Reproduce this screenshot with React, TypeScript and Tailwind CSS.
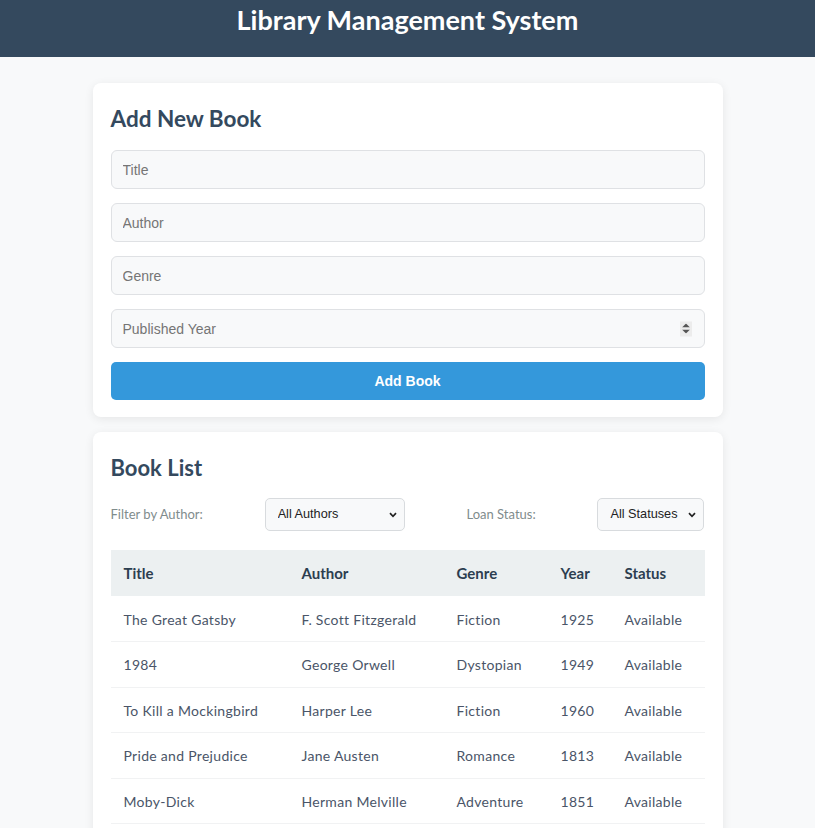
import React from "react";

const books = [
  ["The Great Gatsby", "F. Scott Fitzgerald", "Fiction", "1925", "Available"],
  ["1984", "George Orwell", "Dystopian", "1949", "Available"],
  ["To Kill a Mockingbird", "Harper Lee", "Fiction", "1960", "Available"],
  ["Pride and Prejudice", "Jane Austen", "Romance", "1813", "Available"],
  ["Moby-Dick", "Herman Melville", "Adventure", "1851", "Available"],
];

const Chevron = () => (
  <svg width="8" height="6" viewBox="0 0 8 6" className="pointer-events-none absolute right-[8px] top-1/2 -translate-y-1/2">
    <path d="M1 1.2 L4 4.3 L7 1.2" fill="none" stroke="#222" strokeWidth="1.7" />
  </svg>
);

export default function App() {
  const inputCls =
    "block w-full h-[39px] rounded-[6px] border border-[#dfe1e4] bg-[#f8f9fa] px-[11px] text-[14px] text-[#333] placeholder:text-[#757575] outline-none";
  const selectCls =
    "h-[33px] appearance-none rounded-[5px] border border-[#d8dbde] bg-[#f8f9fa] pl-[12px] text-[12.7px] text-[#222] outline-none";
  return (
    <div className="min-h-[828px] bg-[#f8f9fa]" style={{ fontFamily: "Lato, 'Noto Sans', sans-serif" }}>
      <header className="h-[57px] bg-[#34495e] pt-[2px] text-center">
        <h1 className="text-[27px] font-bold leading-[36px] text-white">Library Management System</h1>
      </header>
      <main className="mx-auto w-[630px] pt-[26px]">
        <section className="rounded-[8px] bg-white px-[18px] pt-[21px] pb-[17px] shadow-[0_2px_10px_rgba(0,0,0,0.08)]">
          <h2 className="mb-[16px] text-[22.5px] font-bold leading-[30px] text-[#34495e]">Add New Book</h2>
          <div className="flex flex-col gap-[14px]" style={{ fontFamily: "'Liberation Sans', Arial, sans-serif" }}>
            <input className={inputCls} placeholder="Title" />
            <input className={inputCls} placeholder="Author" />
            <input className={inputCls} placeholder="Genre" />
            <div className="relative">
              <input className={inputCls} placeholder="Published Year" />
              <div className="pointer-events-none absolute right-[13px] top-1/2 flex h-[15px] w-[12px] -translate-y-1/2 flex-col items-center justify-center gap-[2px] bg-[#ececec]">
                <svg width="8" height="4" viewBox="0 0 8 4"><path d="M0 4 L4 0 L8 4 Z" fill="#555" /></svg>
                <svg width="8" height="4" viewBox="0 0 8 4"><path d="M0 0 L4 4 L8 0 Z" fill="#555" /></svg>
              </div>
            </div>
            <button className="h-[38px] w-full rounded-[5px] bg-[#3498db] text-[14px] font-bold text-white">Add Book</button>
          </div>
        </section>
        <section className="mt-[15px] rounded-[8px] bg-white px-[18px] pt-[21px] pb-[18px] shadow-[0_2px_10px_rgba(0,0,0,0.08)]">
          <h2 className="mb-[15px] text-[22px] font-bold leading-[30px] text-[#34495e]">Book List</h2>
          <div className="mb-[19px] flex items-center justify-between">
            <label className="text-[13px] text-[#7f8c8d]">Filter by Author:</label>
            <div className="relative">
              <select className={`${selectCls} w-[140px]`} style={{ fontFamily: "'Liberation Sans', Arial, sans-serif" }}>
                <option>All Authors</option>
              </select>
              <Chevron />
            </div>
            <label className="text-[13px] text-[#7f8c8d]">Loan Status:</label>
            <div className="relative">
              <select className={`${selectCls} w-[107px]`} style={{ fontFamily: "'Liberation Sans', Arial, sans-serif" }}>
                <option>All Statuses</option>
              </select>
              <Chevron />
            </div>
          </div>
          <table className="w-full border-collapse text-left text-[14px]">
            <thead>
              <tr className="h-[46px] bg-[#ecf0f1] text-[15px] text-[#2c3e50]">
                <th className="w-[178px] pl-[13px] font-bold">Title</th>
                <th className="w-[155px] pl-[13px] font-bold">Author</th>
                <th className="w-[104px] pl-[13px] font-bold">Genre</th>
                <th className="w-[64px] pl-[13px] font-bold">Year</th>
                <th className="pl-[13px] font-bold">Status</th>
              </tr>
            </thead>
            <tbody>
              {books.map((b) => (
                <tr key={b[0]} className="h-[45.5px] border-b border-[#f1f2f3] tracking-[0.3px] text-[#4a5568]">
                  {b.map((c, i) => (
                    <td key={i} className="pl-[13px] pt-[1px]">{c}</td>
                  ))}
                </tr>
              ))}
            </tbody>
          </table>
        </section>
      </main>
    </div>
  );
}
